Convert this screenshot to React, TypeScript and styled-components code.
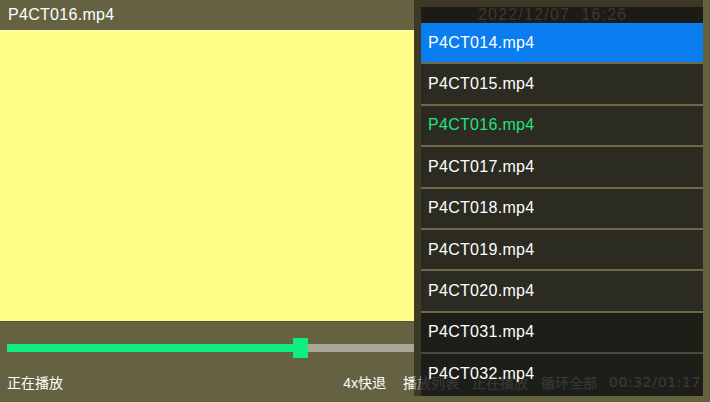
import React from 'react';
import styled, { createGlobalStyle } from 'styled-components';

const GlobalStyle = createGlobalStyle`
  html, body {
    margin: 0;
    padding: 0;
    background: #656241;
  }
  body {
    font-family: "Liberation Sans", "Noto Sans CJK SC", sans-serif;
  }
`;

interface PlayItem {
  name: string;
  state?: 'selected' | 'playing';
  dim?: boolean;
}

const items: PlayItem[] = [
  { name: 'P4CT014.mp4', state: 'selected' },
  { name: 'P4CT015.mp4' },
  { name: 'P4CT016.mp4', state: 'playing' },
  { name: 'P4CT017.mp4' },
  { name: 'P4CT018.mp4' },
  { name: 'P4CT019.mp4' },
  { name: 'P4CT020.mp4' },
  { name: 'P4CT031.mp4', dim: true },
  { name: 'P4CT032.mp4', dim: true },
];

// how far the thumb sits along the visible track
const progress = 293 / 407;

const Screen = styled.div`
  position: relative;
  width: 710px;
  height: 402px;
  overflow: hidden;
  background: #656241;
  display: flex;
  flex-direction: column;
  color: #fff;
`;

const TopBar = styled.div`
  height: 30px;
  flex: none;
  display: flex;
  align-items: center;
  padding-left: 8px;
  font-size: 16px;
  letter-spacing: 0.3px;
`;

const Video = styled.div`
  width: 414px;
  height: 292px;
  flex: none;
  background: #fdfd87;
  border-top: 1px solid #fdfcb4;
  border-bottom: 1px solid #58563a;
  box-sizing: border-box;
`;

const Controls = styled.div`
  flex: 1;
  display: flex;
  flex-direction: column;
  padding: 16px 0 0 7px;
`;

const Track = styled.div`
  position: relative;
  width: 407px;
  height: 20px;
  display: flex;
  align-items: center;
`;

const TrackLine = styled.div`
  width: 100%;
  height: 8px;
  background: #a9a797;
  display: flex;
`;

const TrackFill = styled.div`
  height: 100%;
  background: #10ee80;
`;

const Thumb = styled.div`
  position: absolute;
  top: 0;
  width: 15px;
  height: 20px;
  margin-left: -7px;
  background: #10ee80;
`;

const LabelRow = styled.div`
  margin-top: 14px;
  height: 20px;
  display: flex;
  align-items: center;
  padding-right: 9px;
  font-size: 14px;
`;

const Label = styled.span<{ $gap?: number }>`
  margin-left: ${(p) => p.$gap ?? 0}px;
  white-space: nowrap;
`;

const Spacer = styled.div`
  flex: 1;
`;

const Time = styled.span`
  margin-left: 12px;
  font-family: "DejaVu Sans", sans-serif;
  font-size: 14px;
  letter-spacing: 0.6px;
`;

const Panel = styled.div`
  position: absolute;
  top: 0;
  left: 414px;
  width: 289px;
  bottom: 6px;
  padding: 7px 0 0 7px;
  box-sizing: border-box;
  background: rgba(0, 0, 0, 0.4);
  display: flex;
  flex-direction: column;
`;

const PanelHeader = styled.div`
  height: 16px;
  flex: none;
  background: #1c1c17;
  color: #3a3930;
  font-size: 16px;
  line-height: 15px;
  padding-left: 57px;
  overflow: hidden;
  letter-spacing: 1.2px;
  white-space: nowrap;
`;

const Row = styled.div<{ $state?: string; $dim?: boolean; $last?: boolean }>`
  height: 39.4px;
  flex: none;
  display: flex;
  align-items: center;
  padding-left: 7px;
  font-size: 16px;
  letter-spacing: 0.3px;
  background: ${(p) =>
    p.$state === 'selected' ? '#0a7df0' : p.$dim ? 'rgba(20, 20, 19, 0.72)' : '#2c2b22'};
  color: ${(p) => (p.$state === 'playing' ? '#1fe47d' : '#fff')};
  border-bottom: 2px solid
    ${(p) => (p.$last ? 'transparent' : p.$dim ? '#4a4a44' : '#6c6a4b')};
`;

export default function App() {
  return (
    <>
      <GlobalStyle />
      <Screen>
        <TopBar>P4CT016.mp4</TopBar>
        <Video />
        <Controls>
          <Track>
            <TrackLine>
              <TrackFill style={{ width: `${progress * 100}%` }} />
            </TrackLine>
            <Thumb style={{ left: `${progress * 100}%` }} />
          </Track>
          <LabelRow>
            <Label>正在播放</Label>
            <Spacer />
            <Label>4x快退</Label>
            <Label $gap={17}>播放列表</Label>
            <Label $gap={13}>正在播放</Label>
            <Label $gap={13}>循环全部</Label>
            <Time>00:32/01:17</Time>
          </LabelRow>
        </Controls>
        <Panel>
          <PanelHeader>2022/12/07&nbsp;&nbsp;16:26</PanelHeader>
          {items.map((it, i) => (
            <Row key={it.name} $state={it.state} $dim={it.dim} $last={i === items.length - 1}>
              {it.name}
            </Row>
          ))}
        </Panel>
      </Screen>
    </>
  );
}
